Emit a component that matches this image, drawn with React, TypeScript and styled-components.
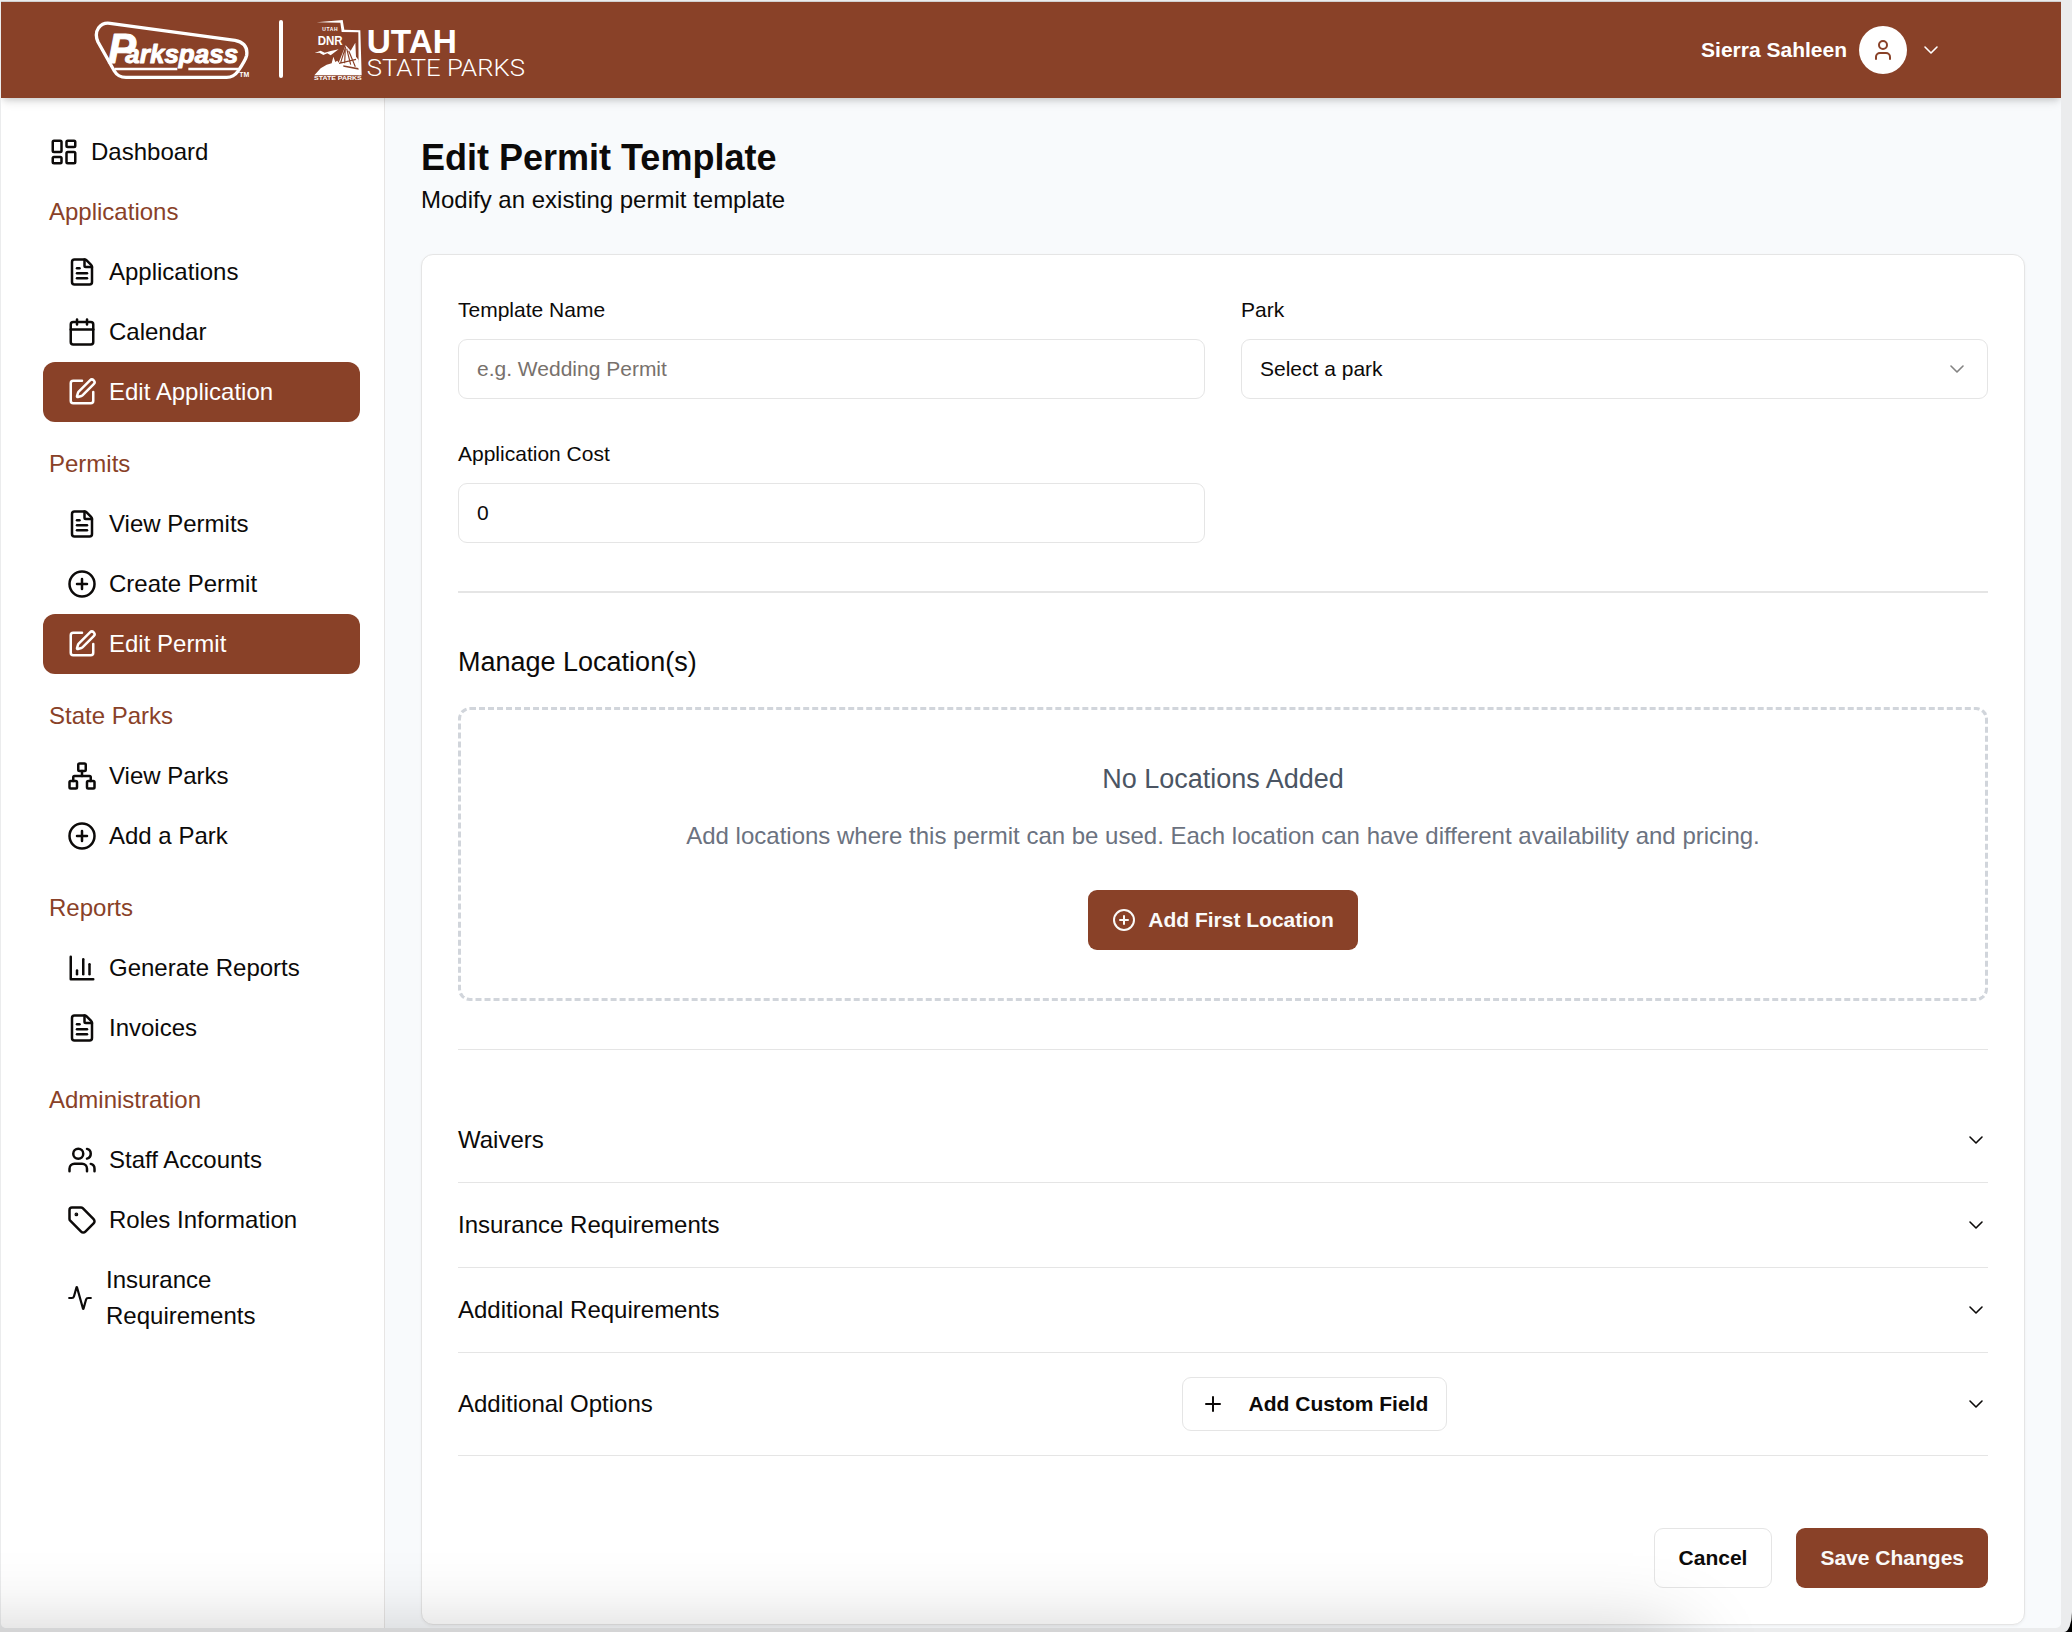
import React from "react";
import styled, { createGlobalStyle, css } from "styled-components";
import {
  Activity,
  Calendar,
  ChevronDown,
  CirclePlus,
  FileText,
  LayoutDashboard,
  Network,
  Plus,
  SquarePen,
  Tag,
  User,
  Users,
} from "lucide-react";

const brand = "#894128";
const ink = "#0c0a09";
const line = "#e5e5e5";

const GlobalStyle = createGlobalStyle`
  *, *::before, *::after { box-sizing: border-box; }
  body {
    margin: 0;
    background: #000;
    color: ${ink};
    font-family: "Liberation Sans", Arial, Helvetica, sans-serif;
    font-size: 24px;
    line-height: 36px;
  }
  h1, h2, h3, p { margin: 0; font-weight: 400; }
  button, input { font-family: inherit; color: inherit; }
  svg { display: block; flex: none; }
`;

const Window = styled.div`
  position: relative;
  width: 2072px;
  height: 1632px;
  padding: 1px 11px 4px 1px;
  overflow: hidden;
  background: #ebeced;
  border-bottom-right-radius: 8px 20px;
`;

const Viewport = styled.div`
  display: flex;
  flex-direction: column;
  height: 1627px;
  border-top: 1px solid #d0d0d1;
  border-radius: 0 0 5px 5px;
  overflow: hidden;
  background: #f8fafc;
`;

const WindowShadow = styled.div`
  position: absolute;
  left: -200px;
  top: 1640px;
  width: 1880px;
  height: 300px;
  box-shadow: 0 0 80px rgba(0, 0, 0, 0.24);
  pointer-events: none;
`;

const Header = styled.header`
  position: relative;
  z-index: 1;
  display: flex;
  flex: none;
  align-items: center;
  justify-content: space-between;
  height: 96px;
  padding: 0 118px 0 92px;
  background: ${brand};
  color: #fff;
  box-shadow: 0 6px 9px -1.5px rgba(0, 0, 0, 0.1), 0 3px 6px -2px rgba(0, 0, 0, 0.14);
`;

const Brands = styled.div`
  display: flex;
  align-items: center;
`;

const BrandDivider = styled.span`
  width: 4px;
  height: 58px;
  margin: 0 30px 2px 29px;
  border-radius: 2px;
  background: #fff;
`;

const Account = styled.div`
  display: flex;
  align-items: center;
  gap: 12px;
  font-size: 21px;
  font-weight: 700;
`;

const Avatar = styled.span`
  display: grid;
  place-items: center;
  width: 48px;
  height: 48px;
  border-radius: 50%;
  background: #fff;
  color: ${brand};
`;

const Body = styled.div`
  display: flex;
  flex: 1;
  min-height: 0;
`;

const Sidebar = styled.nav`
  display: flex;
  flex: none;
  flex-direction: column;
  gap: 12px;
  width: 384px;
  padding: 24px 24px 0 42px;
  border-right: 1px solid #e7e5e4;
  background: #fff;
`;

const NavGroup = styled.div`
  display: flex;
  flex-direction: column;
`;

const NavHeading = styled.div`
  padding: 12px 6px;
  color: ${brand};
`;

const NavItem = styled.a<{ $active?: boolean; $top?: boolean }>`
  display: flex;
  align-items: center;
  gap: 12px;
  padding: 12px 24px 12px ${(p) => (p.$top ? 6 : 24)}px;
  border-radius: 12px;
  ${(p) =>
    p.$active &&
    css`
      background: ${brand};
      color: #fff;
    `}
`;

const NavLabel = styled.span<{ $narrow?: boolean }>`
  ${(p) => p.$narrow && "width: 200px; padding-left: 1px;"}
`;

const Main = styled.main`
  flex: 1;
  min-width: 0;
  padding: 36px 36px 0;
`;

const Title = styled.h1`
  font-size: 36px;
  line-height: 48px;
  font-weight: 700;
`;

const Card = styled.section`
  display: flex;
  flex-direction: column;
  margin-top: 36px;
  padding: 36px;
  border: 1px solid ${line};
  border-radius: 12px;
  background: #fff;
  box-shadow: 0 1px 3px rgba(0, 0, 0, 0.05);
`;

const Fields = styled.div`
  display: grid;
  grid-template-columns: 1fr 1fr;
  gap: 36px;
`;

const Field = styled.label`
  display: flex;
  flex-direction: column;
  gap: 11px;
  font-size: 21px;
`;

const FieldLabel = styled.span`
  padding-top: 1px;
`;

const control = css`
  width: 100%;
  height: 60px;
  padding: 0 18px;
  border: 1px solid ${line};
  border-radius: 9px;
  background: #fff;
  font-size: 21px;
`;

const Input = styled.input`
  ${control}
  &::placeholder {
    color: #78716c;
    opacity: 1;
  }
`;

const Select = styled.button`
  ${control}
  display: flex;
  align-items: center;
  justify-content: space-between;
  svg {
    opacity: 0.5;
  }
`;

const Rule = styled.hr<{ $thick?: boolean }>`
  width: 100%;
  height: ${(p) => (p.$thick ? 2 : 1)}px;
  margin: 48px 0;
  border: 0;
  background: ${line};
`;

const SectionTitle = styled.h2`
  font-size: 27px;
  line-height: 42px;
`;

const EmptyState = styled.div`
  display: flex;
  flex-direction: column;
  align-items: center;
  margin-top: 24px;
  padding: 48px;
  border: 3px dashed #d1d5db;
  border-radius: 12px;
`;

const EmptyTitle = styled.h3`
  color: #4b5563;
  font-size: 27px;
  line-height: 42px;
`;

const EmptyText = styled.p`
  margin: 18px 0 36px;
  color: #6b7280;
`;

const Button = styled.button<{ $primary?: boolean; $compact?: boolean }>`
  display: flex;
  align-items: center;
  gap: ${(p) => (p.$compact ? 24 : 12)}px;
  height: ${(p) => (p.$compact ? 54 : 60)}px;
  padding: 0 ${(p) => (p.$compact ? 18 : 24)}px;
  border: ${(p) => (p.$primary ? "0" : `1px solid ${line}`)};
  border-radius: 9px;
  background: ${(p) => (p.$primary ? brand : "#fff")};
  color: ${(p) => (p.$primary ? "#fafaf9" : ink)};
  font-size: 21px;
  font-weight: 700;
  white-space: nowrap;
`;

const AccordionRow = styled.div`
  display: flex;
  align-items: center;
  justify-content: space-between;
  padding: 24px 0;
  border-bottom: 1px solid ${line};
  ${Button} {
    margin-left: 12px;
  }
`;

const Actions = styled.div`
  display: flex;
  justify-content: flex-end;
  gap: 24px;
  margin-top: 72px;
`;

const Chevron = () => <ChevronDown size={24} strokeWidth={1.6} />;

const ChartIcon = ({ size = 30 }: { size?: number }) => (
  <svg
    width={size}
    height={size}
    viewBox="0 0 24 24"
    fill="none"
    stroke="currentColor"
    strokeWidth="2"
    strokeLinecap="round"
    strokeLinejoin="round"
  >
    <path d="M3 3v18h18" />
    <path d="M18 17V9" />
    <path d="M13 17V5" />
    <path d="M8 17v-3" />
  </svg>
);

const ParkspassLogo = () => (
  <svg width="157" height="60" viewBox="39 60 471 180" fill="none">
    <path
      d="M90 70 L465 121 Q505 129 500 166 Q497 180 473 215 Q461 232 440 232 L138 232 Q114 232 103 213 L54 126 Q43 102 56 83 Q68 67 90 70 Z"
      stroke="#fff"
      strokeWidth="10"
      strokeLinejoin="round"
    />
    <path d="M104 207 H292 M325 207 H474" stroke="#fff" strokeWidth="7" />
    <text
      x="84"
      y="190"
      fill="#fff"
      stroke="#fff"
      strokeWidth="3"
      strokeLinejoin="round"
      fontFamily="'Liberation Sans', Arial, sans-serif"
      fontWeight="700"
      fontStyle="italic"
    >
      <tspan fontSize="126">P</tspan>
      <tspan fontSize="78" dx="-32">
        arkspass
      </tspan>
    </text>
    <text
      x="478"
      y="230"
      fill="#fff"
      fontFamily="'Liberation Sans', Arial, sans-serif"
      fontWeight="700"
      fontSize="19"
      textLength="30"
      lengthAdjust="spacingAndGlyphs"
    >
      TM
    </text>
  </svg>
);

const UtahParksLogo = () => (
  <svg
    width="214"
    height="64"
    viewBox="699 54 642 192"
    fill="#fff"
    fontFamily="'Liberation Sans', Arial, sans-serif"
    fontWeight="700"
  >
    <path d="M710 67 L788 60 L793 89 L841 91 L845 226 L836 226 L835 97 L785 96 L781 68 Z" />
    <path d="M704 159 L722 152 L734 158 L752 153 L776 148 L760 160 L752 166 L742 160 L730 165 L718 158 Z" />
    <path d="M703 226 L722 205 L740 194 L755 190 L760 170 L766 186 L772 182 L776 188 L797 136 L812 152 L826 128 L828 170 L836 180 L840 226 Z" />
    <path
      d="M797 140 L782 188 M796 144 L794 190 M800 146 L812 194 M806 152 L826 200 M777 190 L828 178"
      stroke={brand}
      strokeWidth="3.5"
      fill="none"
    />
    <path d="M790 196 L835 204 L836 209 L790 200 Z" fill={brand} />
    <text x="727" y="94" fontSize="15" textLength="46">UTAH</text>
    <text
      x="713"
      y="136"
      fontSize="41"
      textLength="75"
      lengthAdjust="spacingAndGlyphs"
      stroke={brand}
      strokeWidth="3"
      paintOrder="stroke"
    >
      DNR
    </text>
    <text x="702" y="240" fontSize="15" textLength="143" lengthAdjust="spacingAndGlyphs">
      STATE PARKS
    </text>
    <text x="860" y="160" fontSize="97" textLength="271" lengthAdjust="spacingAndGlyphs">
      UTAH
    </text>
    <text
      x="860"
      y="227"
      fontSize="69"
      fontWeight="300"
      fontFamily="Roboto, 'Liberation Sans', sans-serif"
      textLength="475"
      lengthAdjust="spacingAndGlyphs"
    >
      STATE PARKS
    </text>
  </svg>
);

type IconType = React.ComponentType<{ size?: number }>;
type Item = { label: string; icon: IconType; active?: boolean };

const groups: { heading: string; items: Item[] }[] = [
  {
    heading: "Applications",
    items: [
      { label: "Applications", icon: FileText },
      { label: "Calendar", icon: Calendar },
      { label: "Edit Application", icon: SquarePen, active: true },
    ],
  },
  {
    heading: "Permits",
    items: [
      { label: "View Permits", icon: FileText },
      { label: "Create Permit", icon: CirclePlus },
      { label: "Edit Permit", icon: SquarePen, active: true },
    ],
  },
  {
    heading: "State Parks",
    items: [
      { label: "View Parks", icon: Network },
      { label: "Add a Park", icon: CirclePlus },
    ],
  },
  {
    heading: "Reports",
    items: [
      { label: "Generate Reports", icon: ChartIcon },
      { label: "Invoices", icon: FileText },
    ],
  },
  {
    heading: "Administration",
    items: [
      { label: "Staff Accounts", icon: Users },
      { label: "Roles Information", icon: Tag },
    ],
  },
];

const requirements = ["Waivers", "Insurance Requirements", "Additional Requirements"];

export default function App() {
  return (
    <>
      <GlobalStyle />
      <Window>
        <Viewport>
          <Header>
            <Brands>
              <ParkspassLogo />
              <BrandDivider />
              <UtahParksLogo />
            </Brands>
            <Account>
              <span>Sierra Sahleen</span>
              <Avatar>
                <User size={24} />
              </Avatar>
              <Chevron />
            </Account>
          </Header>
          <Body>
            <Sidebar>
              <NavGroup>
                <NavItem $top>
                  <LayoutDashboard size={30} />
                  <NavLabel>Dashboard</NavLabel>
                </NavItem>
                <NavHeading>{groups[0].heading}</NavHeading>
                {groups[0].items.map(({ label, icon: Icon, active }) => (
                  <NavItem key={label} $active={active}>
                    <Icon size={30} />
                    <NavLabel>{label}</NavLabel>
                  </NavItem>
                ))}
              </NavGroup>
              {groups.slice(1).map((group) => (
                <NavGroup key={group.heading}>
                  <NavHeading>{group.heading}</NavHeading>
                  {group.items.map(({ label, icon: Icon, active }) => (
                    <NavItem key={label} $active={active}>
                      <Icon size={30} />
                      <NavLabel>{label}</NavLabel>
                    </NavItem>
                  ))}
                  {group.heading === "Administration" && (
                    <NavItem>
                      <Activity size={26} />
                      <NavLabel $narrow>Insurance Requirements</NavLabel>
                    </NavItem>
                  )}
                </NavGroup>
              ))}
            </Sidebar>
            <Main>
              <Title>Edit Permit Template</Title>
              <p>Modify an existing permit template</p>
              <Card>
                <Fields>
                  <Field>
                    <FieldLabel>Template Name</FieldLabel>
                    <Input placeholder="e.g. Wedding Permit" />
                  </Field>
                  <Field as="div">
                    <FieldLabel>Park</FieldLabel>
                    <Select type="button">
                      <span>Select a park</span>
                      <Chevron />
                    </Select>
                  </Field>
                  <Field>
                    <FieldLabel>Application Cost</FieldLabel>
                    <Input defaultValue="0" />
                  </Field>
                </Fields>
                <Rule $thick />
                <SectionTitle>Manage Location(s)</SectionTitle>
                <EmptyState>
                  <EmptyTitle>No Locations Added</EmptyTitle>
                  <EmptyText>
                    Add locations where this permit can be used. Each location can have different
                    availability and pricing.
                  </EmptyText>
                  <Button $primary>
                    <CirclePlus size={24} />
                    Add First Location
                  </Button>
                </EmptyState>
                <Rule />
                {requirements.map((name) => (
                  <AccordionRow key={name}>
                    <span>{name}</span>
                    <Chevron />
                  </AccordionRow>
                ))}
                <AccordionRow>
                  <span>Additional Options</span>
                  <Button $compact>
                    <Plus size={24} />
                    Add Custom Field
                  </Button>
                  <Chevron />
                </AccordionRow>
                <Actions>
                  <Button>Cancel</Button>
                  <Button $primary>Save Changes</Button>
                </Actions>
              </Card>
            </Main>
          </Body>
        </Viewport>
        <WindowShadow />
      </Window>
    </>
  );
}
